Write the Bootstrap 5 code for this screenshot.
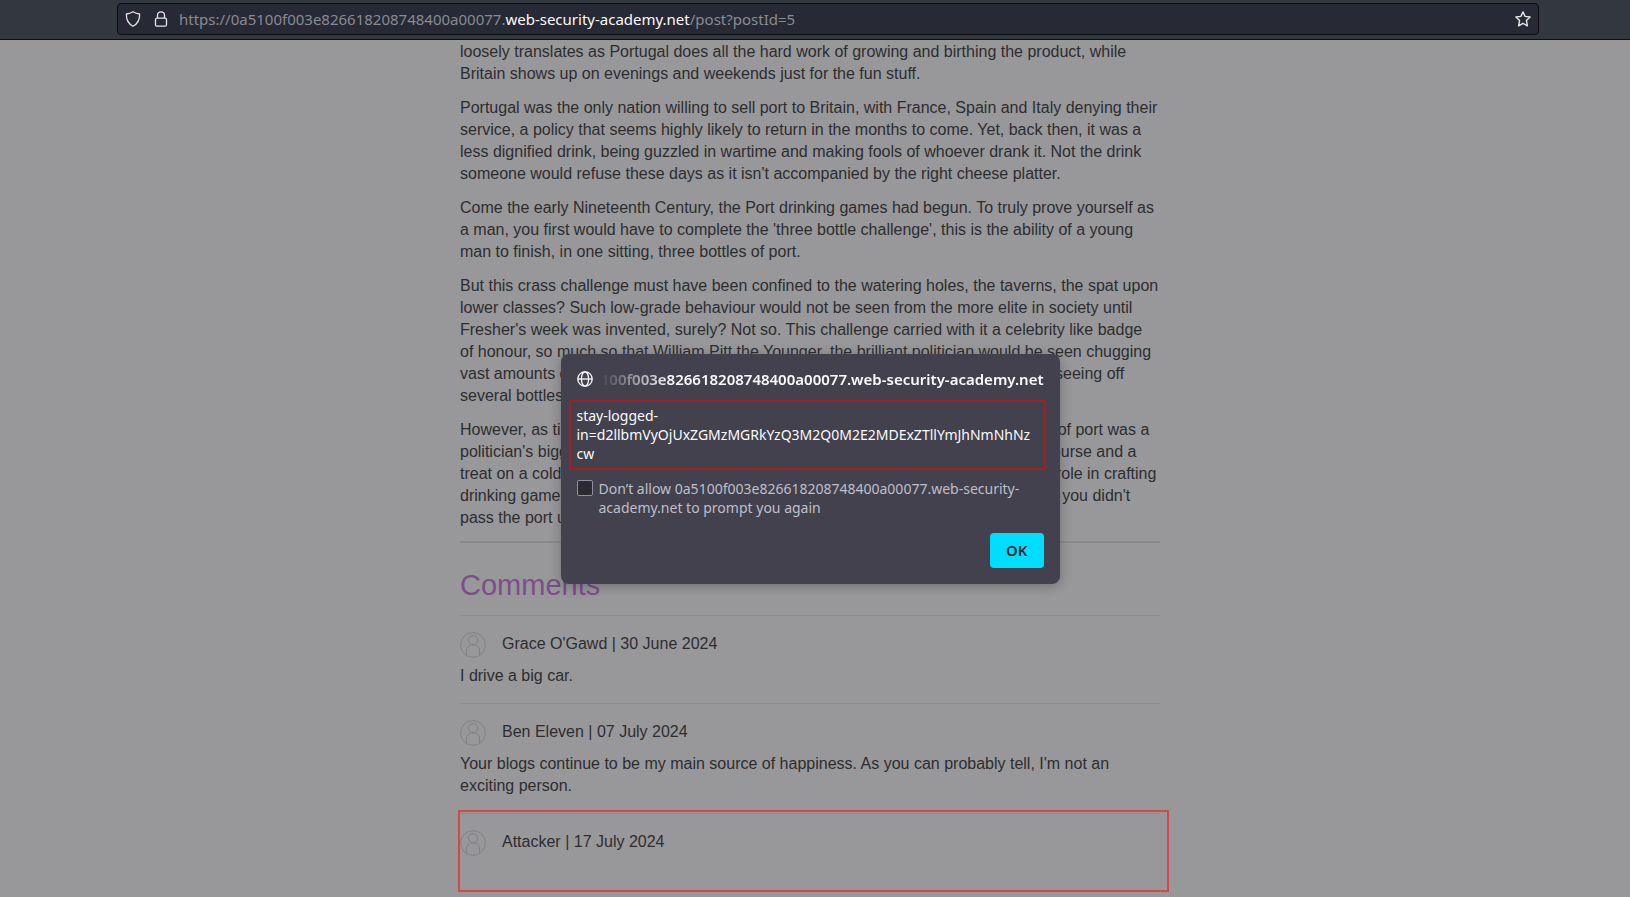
<!DOCTYPE html>
<html lang="en">
<head>
<meta charset="utf-8">
<meta name="viewport" content="width=device-width, initial-scale=1">
<title>Blog post</title>
<link href="https://cdn.jsdelivr.net/npm/bootstrap@5.3.0/dist/css/bootstrap.min.css" rel="stylesheet">
<style>
  :root { --page: #98989a; --ink: #2d2d30; --rule: #8a8a8d; }
  body { background: var(--page); color: var(--ink); font: 16px/22px "Liberation Sans", Arial, sans-serif; }
  .chrome-font { font-family: "Noto Sans", sans-serif; }

  .toolbar { height: 40px; background: #33373e; border-bottom: 1px solid #0e0f13; padding: 3px 91px 4px 117px; }
  .address { background: #272935; border: 1px solid #0c0d12; border-radius: 4px; padding: 0 7px; color: #fbfbfe; font-size: 15px; line-height: 30px; }
  .address a { color: #898b93; margin-left: 10px; }
  .address strong { color: #fbfbfe; font-weight: 400; }
  .icon-btn { background: none; border: 0; padding: 0; line-height: 0; color: #e6e6ea; }

  .viewport { padding: 1px 10px 0 0; }
  .post { max-width: 700px; }
  .post p { margin: 0 0 12px; }
  .post hr { margin: 0 0 24px; border: 0; height: 2px; background: var(--rule); opacity: 1; }
  .post h1 { color: #7b4f88; font-size: 29px; line-height: 36px; font-weight: 400; margin: 0 0 12px; }
  .comment { border-top: 1px solid #8d8d90; padding: 16px 0; }
  .comment .author { height: 26px; line-height: 24px; margin-bottom: 7px; gap: 16px; }
  .comment p { margin: 0; }
  .flagged { min-height: 80px; }
  .flagged::after { content: ""; position: absolute; inset: -4px -9px 1px -2px; border: 2px solid #d4474e; }

  .prompt { position: absolute; top: 354px; left: 0; right: 10px; width: 499px; margin: 0 auto; padding: 16px; background: #42414d; color: #fbfbfe; border-radius: 8px; box-shadow: 0 2px 12px rgba(20,20,30,.3); font-size: 14px; line-height: 19px; }
  .origin { font-weight: 600; font-size: 15px; height: 18px; gap: 6px; }
  .origin-host { display: flex; justify-content: flex-end; white-space: nowrap; overflow: hidden; -webkit-mask-image: linear-gradient(to right, transparent, #000 72px); mask-image: linear-gradient(to right, transparent, #000 72px); }
  .message { margin: 12px -2px 9px -8px; border: 2px solid #a31f26; padding: 4px 0 5px 6px; }
  .block-choice { gap: 6px; }
  .prompt label { color: #bfbfc9; }
  .prompt .form-check-input { width: 16px; height: 16px; margin: 1px 0 0; background-color: #2b2a33; border: 1px solid #8f8f9d; border-radius: 2px; }
  .actions { margin-top: 16px; }
  .ok { background: #00ddff; color: #2b2a33; font-weight: 600; font-size: 15px; line-height: 19px; padding: 8px 16px; border: 0; border-radius: 4px; }
</style>
</head>
<body>
<svg class="d-none" aria-hidden="true">
  <symbol id="avatar" viewBox="0 0 26 26"><g fill="none" stroke="#828285" stroke-width="1"><circle cx="13" cy="13" r="12.4"/><circle cx="13" cy="8.2" r="4.6"/><path d="M6.3 23.4V19a6.5 6.3 0 0 1 13.3 0v4.4"/></g></symbol>
</svg>

<header class="toolbar chrome-font">
  <div class="address d-flex align-items-center">
    <button class="icon-btn" aria-label="Tracking protection"><svg width="16" height="16" viewBox="0 0 16 16" fill="none" stroke="currentColor" stroke-width="1.3" stroke-linejoin="round"><path d="M8 .8c2 1.300 4 2 6.600 2.200.3 5.500-1.800 9.600-6.600 12.200C3.200 12.600 1.100 8.500 1.400 3 4 2.800 6 2.100 8 .8z"/></svg></button>
    <button class="icon-btn ms-2 ps-1" aria-label="Site information"><svg width="16" height="16" viewBox="0 0 16 16" fill="none" stroke="currentColor" stroke-width="1.3"><rect x="2.500" y="7.200" width="11" height="8" rx="1.500"/><path d="M4.500 7V4.300a3.500 3.500 0 0 1 7 0V7"/></svg></button>
    <a class="text-decoration-none flex-grow-1" href="#">https://0a5100f003e826618208748400a00077.<strong>web-security-academy.net</strong>/post?postId=5</a>
    <button class="icon-btn" aria-label="Bookmark this page"><svg width="16" height="16" viewBox="0 0 16 16" fill="none" stroke="currentColor" stroke-width="1.4" stroke-linejoin="round"><path d="M8 .9l2.100 4.500 5 .6-3.700 3.500 1 5.300L8 12.400l-4.400 2.400 1-5.300L.9 6l5-.6z"/></svg></button>
  </div>
</header>

<main class="viewport">
  <article class="post mx-auto">
    <p>loosely translates as Portugal does all the hard work of growing and birthing the product, while<br>Britain shows up on evenings and weekends just for the fun stuff.</p>
    <p>Portugal was the only nation willing to sell port to Britain, with France, Spain and Italy denying their service, a policy that seems highly likely to return in the months to come. Yet, back then, it was a less dignified drink, being guzzled in wartime and making fools of whoever drank it. Not the drink someone would refuse these days as it isn't accompanied by the right cheese platter.</p>
    <p>Come the early Nineteenth Century, the Port drinking games had begun. To truly prove yourself as a man, you first would have to complete the 'three bottle challenge', this is the ability of a young man to finish, in one sitting, three bottles of port.</p>
    <p>But this crass challenge must have been confined to the watering holes, the taverns, the spat upon lower classes? Such low-grade behaviour would not be seen from the more elite in society until Fresher's week was invented, surely? Not so. This challenge carried with it a celebrity like badge<br>of honour, so much so that William Pitt the Younger, the brilliant politician would be seen chugging<br>vast amounts of port before heading in late one night, to give it a long speech, often seeing off<br>several bottles in a single day.</p>
    <p>However, as time went on and once indeed the games at last calmed down, the role of port was a<br>politician's biggest indulgence no more, and indeed at last became an after-dinner course and a<br>treat on a cold winter evening. Yet again indeed we at last still thank it for its leading role in crafting<br>drinking games late and again indeed for all of the etiquette at last at the table, when you didn't<br>pass the port up to the left, you were out.</p>
    <hr>
    <h1>Comments</h1>
    <section class="comment">
      <div class="author d-flex"><svg width="26" height="26"><use href="#avatar"/></svg><span>Grace O'Gawd | 30 June 2024</span></div>
      <p>I drive a big car.</p>
    </section>
    <section class="comment">
      <div class="author d-flex"><svg width="26" height="26"><use href="#avatar"/></svg><span>Ben Eleven | 07 July 2024</span></div>
      <p>Your blogs continue to be my main source of happiness. As you can probably tell, I'm not an exciting person.</p>
    </section>
    <section class="comment flagged position-relative">
      <div class="author d-flex"><svg width="26" height="26"><use href="#avatar"/></svg><span>Attacker | 17 July 2024</span></div>
    </section>
  </article>
</main>

<div class="prompt chrome-font" role="dialog" aria-label="Page prompt">
  <div class="origin d-flex align-items-center">
    <svg class="flex-shrink-0" width="16" height="16" viewBox="0 0 16 16" fill="none" stroke="currentColor" stroke-width="1.300"><circle cx="8" cy="8" r="7.200"/><ellipse cx="8" cy="8" rx="3.600" ry="7.200"/><path d="M1 8h14"/></svg>
    <span class="origin-host"><span>0a5100f003e826618208748400a00077.web-security-academy.net</span></span>
  </div>
  <div class="message">stay-logged-<br>in=d2llbmVyOjUxZGMzMGRkYzQ3M2Q0M2E2MDExZTllYmJhNmNhNz<br>cw</div>
  <div class="block-choice d-flex">
    <input class="form-check-input flex-shrink-0 shadow-none" type="checkbox" id="block">
    <label for="block">Don’t allow 0a5100f003e826618208748400a00077.web-security-<br>academy.net to prompt you again</label>
  </div>
  <div class="actions d-flex justify-content-end"><button class="ok">OK</button></div>
</div>
<script src="https://cdn.jsdelivr.net/npm/bootstrap@5.3.0/dist/js/bootstrap.bundle.min.js"></script>
</body>
</html>
